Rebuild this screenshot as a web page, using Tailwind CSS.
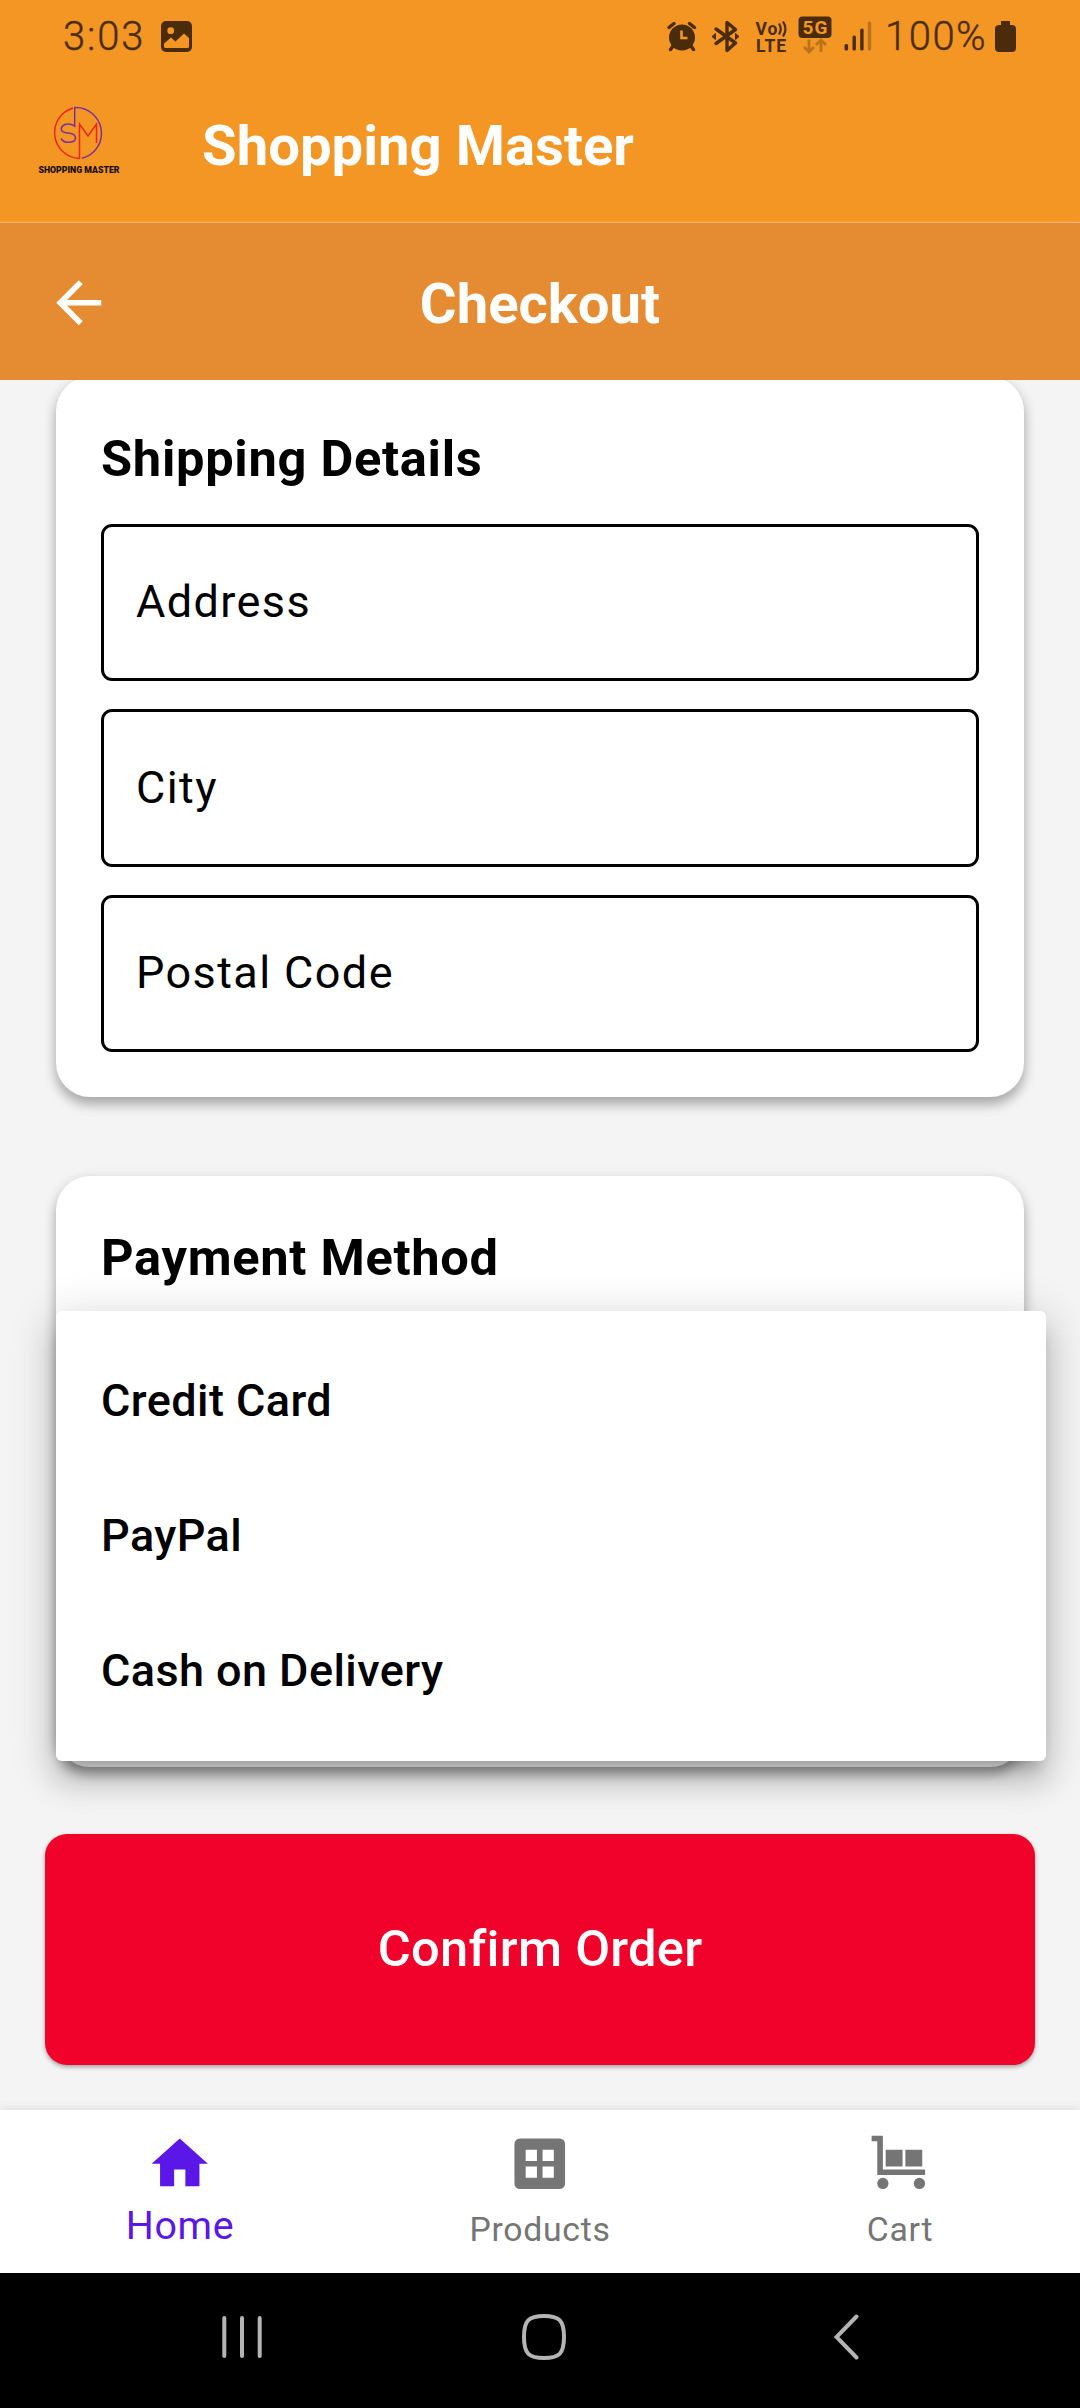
<!DOCTYPE html>
<html lang="en">
<head>
<meta charset="utf-8">
<title>Shopping Master</title>
<script src="https://cdn.jsdelivr.net/npm/@tailwindcss/browser@4"></script>
</head>
<body class="w-[1080px] h-[2408px] overflow-hidden bg-[#f4f4f4] font-['Roboto',sans-serif] text-black flex flex-col">
<header class="relative z-10 shrink-0">
  <div class="h-[222px] bg-[#f39624]">
    <div class="h-[74px] pl-[63px] pr-[64px] flex items-center justify-between text-[#4a2c0b]">
      <div class="flex items-center">
        <span class="w-[98px] text-[40px] leading-[74px] font-light tracking-[1.800px] [-webkit-text-stroke:0.400px_#4a2c0b]">3:03</span>
        <svg class="w-[31px] h-[31px] mb-[1px]" viewBox="0 0 31 31"><rect width="31" height="31" rx="5" fill="#4a2c0b"/><circle cx="9.7" cy="9.7" r="3.4" fill="#f39624"/><path d="M3 22.500l7-6 4.500 4 8.500-8 5 4.500v8.500q0 1.500-1.500 1.500h-22q-1.500 0-1.500-1.500z" fill="#f39624"/></svg>
      </div>
      <div class="flex items-center">
        <svg class="w-[222px] h-[74px] shrink-0" viewBox="661.500 0.500 222 74" fill="#4a2c0b" stroke="none">
          <circle cx="682.500" cy="38" r="13"/><path d="M669.500 28l5-4M695 28l-5-4M674 46l-3 4M691 46l3 4" stroke="#4a2c0b" stroke-width="3.500" stroke-linecap="round"/><path d="M682 31v7.500h6" fill="none" stroke="#f39624" stroke-width="2.600"/>
          <path d="M716.500 29.500l19.500 14-8.500 7.500V23l8.500 7-19.500 14" fill="none" stroke="#4a2c0b" stroke-width="3.400" stroke-linecap="round" stroke-linejoin="round"/><path d="M712.500 37l3.500-3v6zM739.500 37l-3.500-3v6z" stroke="#4a2c0b"/>
          <text x="756" y="35" font-size="17.500" font-weight="700" textLength="22">Vo</text><path d="M779.500 24q3.500 5.500 0 11M783.500 22q5 7.500 0 15" fill="none" stroke="#4a2c0b" stroke-width="2.200"/>
          <text x="756.500" y="52" font-size="17.500" font-weight="700" textLength="30">LTE</text>
          <rect x="799" y="17" width="33" height="21.500" rx="4"/><text x="803" y="34.500" font-size="19" font-weight="700" textLength="25" fill="#f39624">5G</text>
          <path d="M809.500 40v12M804.500 47.500l5 5 5-5M821.500 52.500V41M816.500 45.500l5-5 5 5" fill="none" stroke="#b97318" stroke-width="2.800"/>
          <rect x="845" y="44.500" width="3.600" height="6.500" rx="1.500"/><rect x="853" y="36" width="3.400" height="15" rx="1.500"/><rect x="860.700" y="29" width="3.400" height="22" rx="1.500"/><rect x="868.300" y="22" width="3.400" height="29" rx="1.500" fill="#b97318"/>
        </svg>
        <span class="w-[112px] pl-[2px] text-[40px] leading-[74px] font-light tracking-[1.500px] [-webkit-text-stroke:0.400px_#4a2c0b]">100%</span>
        <svg class="w-[21px] h-[31px] mb-[2px] shrink-0" viewBox="0 0 21 31"><path d="M6 0h9v5h-9z" fill="#4a2c0b"/><rect y="4" width="21" height="27" rx="4" fill="#4a2c0b"/></svg>
      </div>
    </div>
    <div class="h-[144px] flex items-center pl-[36px] text-white">
      <svg class="w-[86px] h-[76px] mb-[12px]" viewBox="36 102 86 76" fill="none" stroke-width="1.500">
        <path d="M73 108A25.800 25.800 0 0 0 79.500 158.500V124L88 136l8.500-12v19" stroke="#ee2415"/>
        <path d="M82 158.300A25.800 25.800 0 0 0 74.700 107.500V126Q70 123 65 124.500C60 127 60 131.500 65 132.500L71 133.500C77 135 77 141 71 142Q64 143.500 61 138.500" stroke="#7b2fa0"/>
        <text x="38.500" y="173" font-size="8.500" font-weight="900" textLength="81" lengthAdjust="spacingAndGlyphs" fill="#150c04">SHOPPING MASTER</text>
      </svg>
      <h1 class="ml-[80px] text-[56.25px] font-bold leading-none">Shopping Master</h1>
    </div>
  </div>
  <div class="relative h-[158px] bg-[#e58c32] border-t border-[#f0b679] pt-[5px] flex items-center justify-center text-white">
    <svg class="absolute left-[45px] top-[46px] w-[67.500px] h-[67.500px]" viewBox="0 0 24 24" fill="white"><path d="M20 11H7.830l5.590-5.590L12 4l-8 8 8 8 1.410-1.410L7.830 13H20v-2z"/></svg>
    <h2 class="text-[56.25px] font-bold leading-none">Checkout</h2>
  </div>
</header>

<main class="flex-1 min-h-0 px-[56px] flex flex-col">
  <section class="-mt-[3px] h-[720px] shrink-0 rounded-[34px] bg-white px-[45px] pt-[45px] shadow-[0_8px_12px_rgba(0,0,0,0.26),0_2px_14px_rgba(0,0,0,0.1)]">
    <h3 class="text-[50.625px] font-bold leading-[74px] tracking-[0.700px]">Shipping Details</h3>
    <div class="mt-[27.500px] flex flex-col gap-[28.125px]">
      <div class="h-[157.500px] rounded-[11px] border-[3px] border-black px-[32px] pb-[1px] flex items-center text-[45px] tracking-[1.400px]">Address</div>
      <div class="h-[157.500px] rounded-[11px] border-[3px] border-black px-[32px] pb-[1px] flex items-center text-[45px] tracking-[1.400px]">City</div>
      <div class="h-[157.500px] rounded-[11px] border-[3px] border-black px-[32px] pb-[1px] flex items-center text-[45px] tracking-[1.400px]">Postal Code</div>
    </div>
  </section>
  <section class="relative mt-[79px] h-[591px] shrink-0 rounded-[34px] bg-white px-[45px] pt-[45px] shadow-[0_8px_12px_rgba(0,0,0,0.26),0_2px_14px_rgba(0,0,0,0.1)]">
    <h3 class="text-[50.625px] font-bold leading-[74px] tracking-[0.700px]">Payment Method</h3>
    <ul class="absolute left-0 top-[135px] w-[990px] h-[450px] rounded-[6px] bg-white py-[22px] text-[45px] font-medium tracking-[0.420px] shadow-[0_14px_14px_-8px_rgba(0,0,0,0.22),0_22px_28px_2px_rgba(0,0,0,0.13),0_8px_45px_6px_rgba(0,0,0,0.14)]">
      <li class="h-[135px] px-[45px] flex items-center">Credit Card</li>
      <li class="h-[135px] px-[45px] flex items-center">PayPal</li>
      <li class="h-[135px] px-[45px] flex items-center">Cash on Delivery</li>
    </ul>
  </section>
  <button class="-mx-[11px] mt-[67px] h-[231px] pb-[2px] shrink-0 rounded-[22px] bg-[#f1022b] text-white text-[50.625px] font-medium tracking-[0.280px] [font-variant-ligatures:none] shadow-[0_2px_4px_rgba(0,0,0,0.35)]">Confirm Order</button>
</main>

<nav class="relative h-[163px] shrink-0 bg-white grid grid-cols-3 text-[#757575] shadow-[0_0_10px_rgba(0,0,0,0.12)]">
  <div class="pt-[19.500px] flex flex-col items-center text-[#5b16e8]">
    <svg class="w-[67.500px] h-[67.500px]" viewBox="0 0 24 24" fill="currentColor"><path d="M10 20v-6h4v6h5v-8h3L12 3 2 12h3v8z"/></svg>
    <span class="mt-[6px] text-[39.375px] leading-[46px] tracking-[0.600px]">Home</span>
  </div>
  <div class="pt-[19.500px] flex flex-col items-center">
    <svg class="w-[67.500px] h-[67.500px]" viewBox="0 0 24 24" fill="currentColor" fill-rule="evenodd"><path d="M5 3h14a2 2 0 0 1 2 2v14a2 2 0 0 1-2 2H5a2 2 0 0 1-2-2V5a2 2 0 0 1 2-2zM7 7v4h4V7zM13 7v4h4V7zM7 13v4h4v-4zM13 13v4h4v-4z"/></svg>
    <span class="mt-[13px] text-[33.750px] leading-[40px] tracking-[0.700px]">Products</span>
  </div>
  <div class="pt-[19.500px] flex flex-col items-center">
    <svg class="w-[67.500px] h-[67.500px]" viewBox="0 0 24 24" fill="currentColor"><path d="M2 2h4v12h15v2H4V4H2zM7 7h6v6H7zM14 7h6v6h-6z"/><circle cx="6" cy="19" r="2"/><circle cx="19" cy="19" r="2"/></svg>
    <span class="mt-[13px] text-[33.750px] leading-[40px] tracking-[0.700px]">Cart</span>
  </div>
</nav>

<footer class="h-[135px] shrink-0 bg-black flex items-center pl-[222px] pb-[7px]">
  <svg class="w-[40px] h-[44px]" viewBox="0 0 40 44" stroke="#b4b4b4" stroke-width="4" stroke-linecap="round"><path d="M2.300 3v38M20 3v38M37.700 3v38"/></svg>
  <svg class="w-[44px] h-[46px] ml-[260px]" viewBox="0 0 44 46" fill="none" stroke="#b4b4b4" stroke-width="4"><path d="M22 2C37 2 42 6 42 23S37 44 22 44 2 40 2 23 7 2 22 2z"/></svg>
  <svg class="w-[25px] h-[46px] ml-[268px]" viewBox="0 0 25 46" fill="none" stroke="#b4b4b4" stroke-width="4" stroke-linecap="round"><path d="M22.500 2.500L2.500 23l20 20.500"/></svg>
</footer>
</body>
</html>
